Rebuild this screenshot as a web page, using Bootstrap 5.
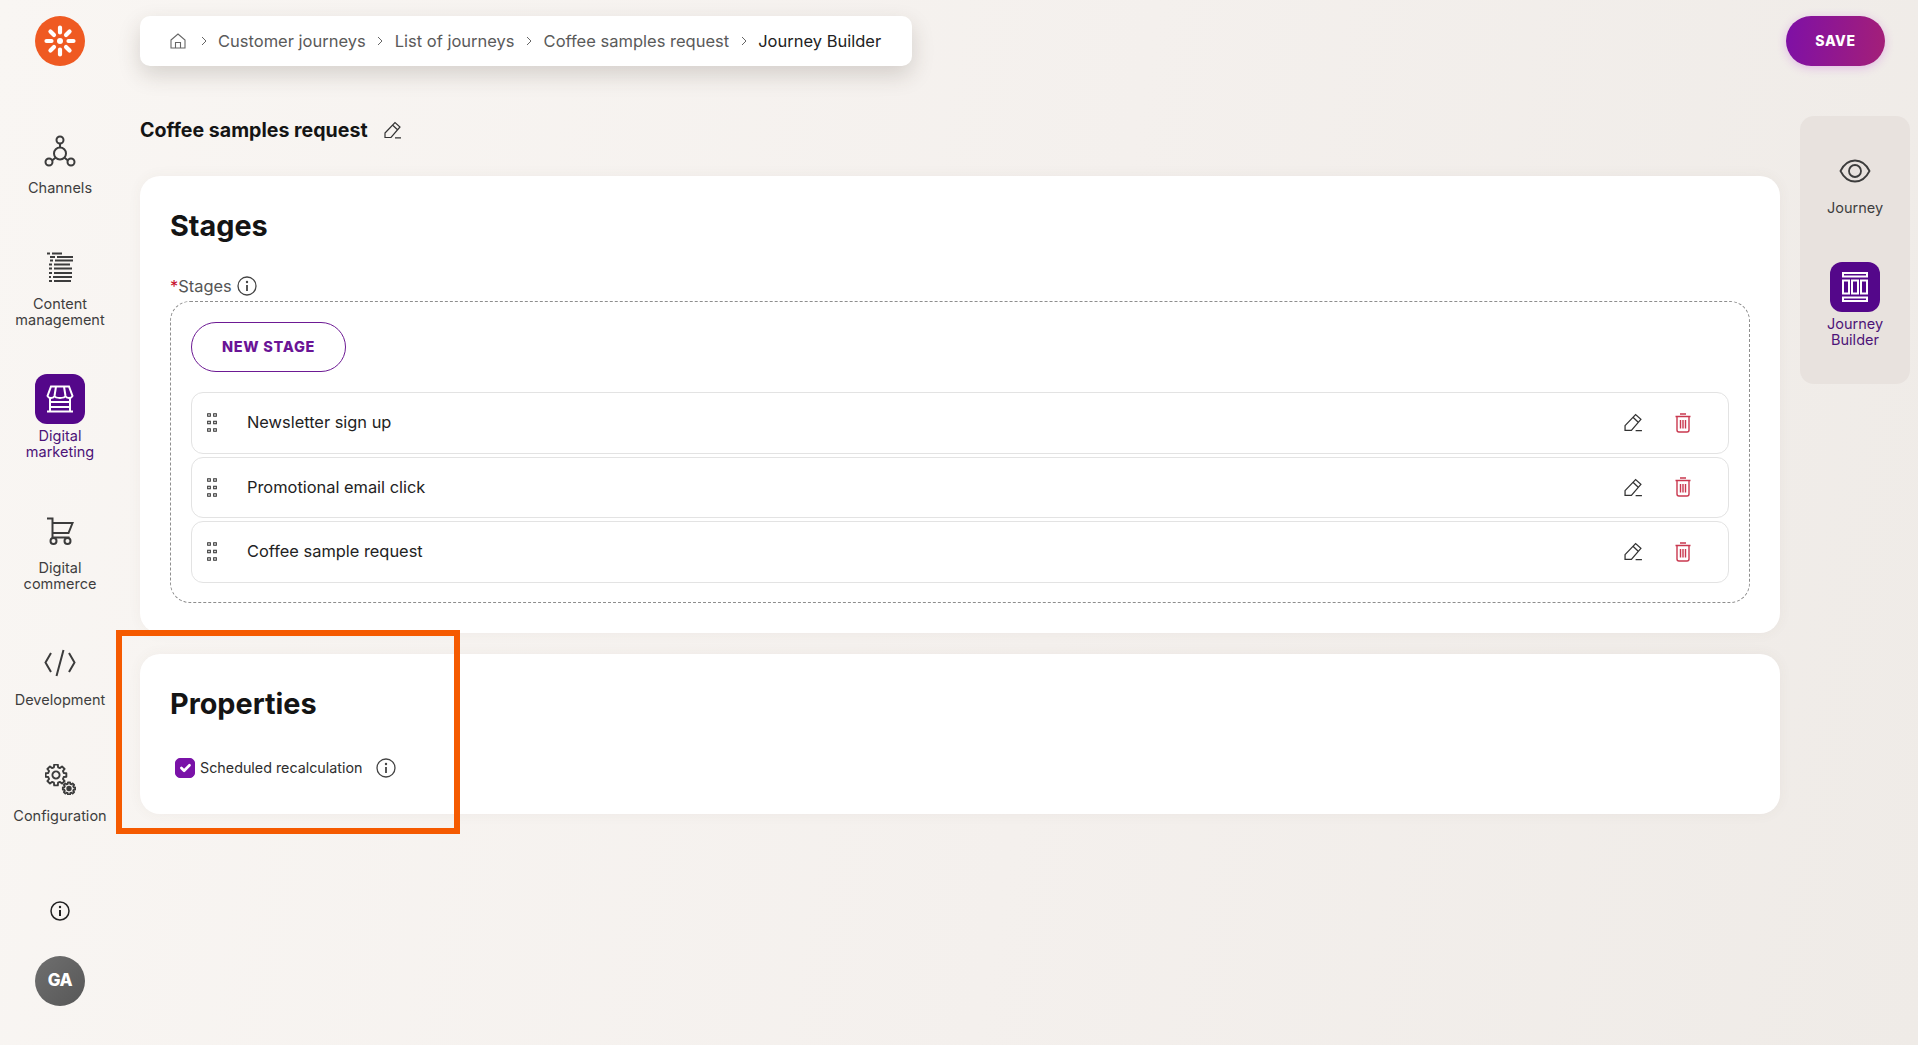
<!DOCTYPE html>
<html lang="en">
<head>
<meta charset="utf-8">
<title>Journey Builder</title>
<link href="https://cdn.jsdelivr.net/npm/bootstrap@5.3.0/dist/css/bootstrap.min.css" rel="stylesheet">
<style>
html,body{height:100%}
body{font-family:Inter,"Noto Sans",sans-serif;background:linear-gradient(100deg,#f9f6f3 0%,#f4f0ed 55%,#efebe7 100%);color:#3c3c3c;overflow:hidden;position:relative}
.app-shell{height:1045px}
.side-rail{width:120px;flex:0 0 120px;padding:16px 0 39px}
.logo-disc{width:50px;height:50px;border-radius:50%;background:#ef5a22}
.rail-list{margin-top:60px;gap:46px}
.rail-item{font-size:14.5px;line-height:16px;color:#3e3e3e;text-align:center;text-decoration:none;width:110px}
.rail-icon{width:50px;height:50px;margin-bottom:4px;color:#3c3c3c}
.rail-item.is-active{color:#4d1478}
.is-active .rail-icon{background:#54078a;border-radius:12px;color:#fff}
.info-rail{color:#222;margin-bottom:35px}
.avatar-disc{width:50px;height:50px;border-radius:50%;background:linear-gradient(135deg,#6f6f6f,#575757);color:#fff;font-weight:800;font-size:17px;letter-spacing:-.5px}
.top-strip{padding:16px 33px 0 0;height:66px}
.crumb-card{height:50px;width:772px;background:#fff;border-radius:10px;box-shadow:0 9px 22px rgba(60,50,40,.18);padding:0 0 0 30px;font-size:16.5px;color:#5a5a5a}
.crumb-card .breadcrumb-item+.breadcrumb-item{padding-left:0}
.crumb-card .breadcrumb-item+.breadcrumb-item::before{display:none}
.crumb-sep{width:29px;flex:0 0 29px;color:#666}
.crumb-home{color:#666;margin-right:3px}
.crumb-card .crumb-now{color:#222}
.save-pill{width:99px;height:50px;border:0;border-radius:25px;background:linear-gradient(95deg,#7e10a6,#a41f78);color:#fff;font-weight:800;font-size:14px;letter-spacing:.6px;box-shadow:0 2px 10px rgba(190,70,220,.3);padding:0 0 2px}
.work-row{margin-top:50px;gap:20px;padding-right:8px}
.work-col{width:1640px;flex:0 0 1640px}
.page-title{font-size:19.6px;line-height:28px;font-weight:700;color:#141414;margin:0 0 32px;gap:16px}
.panel-card{background:#fff;border:0;border-radius:20px;padding:30px;box-shadow:0 0 14px rgba(90,70,50,.05)}
.stages-panel{height:457px;margin-bottom:21px}
.props-panel{height:160px}
.panel-heading{font-size:28.8px;line-height:40px;font-weight:700;color:#141414;margin:0}
.field-label{font-size:16.4px;line-height:24px;color:#555;margin-top:28px;margin-bottom:3px;gap:5px}
.req-star{color:#c8102e}
.dash-box{border:1px dashed #8e8e8e;border-radius:20px;padding:20px;height:302px}
.ghost-pill{width:155px;height:50px;border:1px solid #6d1a94;border-radius:25px;background:#fff;color:#6a1496;font-weight:800;font-size:14.5px;letter-spacing:.7px;padding:0}
.stage-list{margin-top:20px;gap:3px}
.stage-row{height:61.5px;border:1px solid #e3e3e3;border-radius:12px;padding:0 37px 0 15px;font-size:16.4px;color:#222;background:#fff}
.stage-row .stage-name{margin-left:30px}
.row-tools{gap:32px}
.trash-tool{color:#c9384f}
.pen-tool{color:#333}
.check-line{margin-top:34px;padding-left:5px;font-size:14.3px;color:#2e2e2e;gap:5px;height:20px}
.check-line .form-check-input{width:20px;height:20px;margin:0;border-radius:5px;background-color:#7a12a8;border-color:#7a12a8;flex:none}
.check-line svg{margin-left:9px}
.view-rail{width:110px;height:268px;background:#e8e2de;border-radius:14px;padding-top:30px;gap:46px}
.view-rail .rail-item{width:100%}
.annot-frame{position:absolute;left:116px;top:630px;width:344px;height:204px;border:6px solid #f55a00;pointer-events:none}
</style>
</head>
<body>
<div class="app-shell d-flex">
  <aside class="side-rail d-flex flex-column align-items-center">
    <div class="logo-disc d-flex align-items-center justify-content-center">
      <svg width="34" height="34" viewBox="0 0 34 34" fill="none" stroke="#fff" stroke-width="4.200" stroke-linecap="round">
        <path d="M17 3.500v5M17 25.500v5M3.500 17h5M25.500 17h5M7.450 7.450 11 11M23 23l3.550 3.550M26.550 7.450 23 11M11 23l-3.550 3.550"/>
        <circle cx="17" cy="17" r="3" fill="#fff" stroke="none"/>
      </svg>
    </div>
    <nav class="rail-list d-flex flex-column align-items-center">
      <a class="rail-item d-flex flex-column align-items-center" href="#">
        <span class="rail-icon d-flex align-items-center justify-content-center">
          <svg width="32" height="32" viewBox="0 0 32 32" fill="none" stroke="currentColor" stroke-width="2"><circle cx="16" cy="18.500" r="6"/><circle cx="16" cy="5" r="3.500"/><circle cx="5" cy="27" r="3.500"/><circle cx="27" cy="27" r="3.500"/><path d="M16 8.500v4M8 25.500l3.500-2.800M24 25.500l-3.500-2.800"/></svg>
        </span>
        Channels
      </a>
      <a class="rail-item d-flex flex-column align-items-center" href="#">
        <span class="rail-icon d-flex align-items-center justify-content-center">
          <svg width="28" height="30" viewBox="0 0 28 30" fill="none" stroke="currentColor" stroke-width="1.800"><path d="M1 1.500h3M6 1.500h10M4 5h5M11 5h16M4 8.500h3M9 8.500h18M3 12.500h3M8 12.500h16M3 16.500h3M8 16.500h18M3 21h3M8 21h18M3 25h2M7 25h19M3 29h3M8 29h17"/></svg>
        </span>
        Content<br>management
      </a>
      <a class="rail-item is-active d-flex flex-column align-items-center" href="#">
        <span class="rail-icon d-flex align-items-center justify-content-center">
          <svg width="28" height="28" viewBox="0 0 28 28" fill="none" stroke="currentColor" stroke-width="2"><path d="M5 1.500h18l3.500 9.500c-1 2.500-6 2.500-7 0-1 2.500-10 2.500-11 0-1 2.500-6 2.500-7 0zM10 1.500 8.500 11M18 1.500 19.500 11M4 13v13M24 13v13M1 26.500h26M4 17h20M4 22h20"/></svg>
        </span>
        Digital<br>marketing
      </a>
      <a class="rail-item d-flex flex-column align-items-center" href="#">
        <span class="rail-icon d-flex align-items-center justify-content-center">
          <svg width="28" height="28" viewBox="0 0 28 28" fill="none" stroke="currentColor" stroke-width="2"><path d="M1 1.500h5.500v19h17M6.500 6h20L22.500 16H6.500"/><circle cx="7.500" cy="24" r="3"/><circle cx="21.500" cy="24" r="3"/></svg>
        </span>
        Digital<br>commerce
      </a>
      <a class="rail-item d-flex flex-column align-items-center" href="#">
        <span class="rail-icon d-flex align-items-center justify-content-center">
          <svg width="32" height="28" viewBox="0 0 32 28" fill="none" stroke="currentColor" stroke-width="2"><path d="M7 4 1.500 13.500 7 23M25 4l5.500 9.500L25 23M19.500 1l-7 26"/></svg>
        </span>
        Development
      </a>
      <a class="rail-item d-flex flex-column align-items-center" href="#">
        <span class="rail-icon d-flex align-items-center justify-content-center">
          <svg width="31" height="31" viewBox="0 0 31 31" fill="none" stroke="currentColor" stroke-linejoin="round">
            <g transform="translate(11 11)" stroke-width="1.900"><path d="M-2.070-7.730-1.820-10.340 1.820-10.340 2.070-7.730 4-6.930 6.020-8.600 8.600-6.020 6.930-4 7.730-2.070 10.340-1.820 10.340 1.820 7.730 2.070 6.930 4 8.600 6.020 6.020 8.600 4 6.930 2.070 7.730 1.820 10.340-1.820 10.340-2.070 7.730-4 6.930-6.020 8.600-8.600 6.020-6.930 4-7.730 2.070-10.340 1.820-10.340-1.820-7.730-2.070-6.930-4-8.600-6.020-6.020-8.600-4-6.930z"/><circle r="3.600"/></g>
            <g transform="translate(24 24.500) scale(.6)" stroke-width="3"><path d="M-2.070-7.730-1.820-10.340 1.820-10.340 2.070-7.730 4-6.930 6.020-8.600 8.600-6.020 6.930-4 7.730-2.070 10.340-1.820 10.340 1.820 7.730 2.070 6.930 4 8.600 6.020 6.020 8.600 4 6.930 2.070 7.730 1.820 10.340-1.820 10.340-2.070 7.730-4 6.930-6.020 8.600-8.600 6.020-6.930 4-7.730 2.070-10.340 1.820-10.340-1.820-7.730-2.070-6.930-4-8.600-6.020-6.020-8.600-4-6.930z"/><circle r="3" fill="currentColor"/></g>
          </svg>
        </span>
        Configuration
      </a>
    </nav>
    <div class="info-rail mt-auto d-flex">
      <svg width="20" height="20" viewBox="0 0 20 20" fill="none"><circle cx="10" cy="10" r="9" stroke="currentColor" stroke-width="1.500"/><circle cx="10" cy="6" r="1.200" fill="currentColor"/><path d="M10 9v6" stroke="currentColor" stroke-width="2"/></svg>
    </div>
    <div class="avatar-disc d-flex align-items-center justify-content-center">GA</div>
  </aside>

  <main class="flex-grow-1 ps-3 ms-1">
    <header class="top-strip d-flex justify-content-between">
      <ol class="crumb-card breadcrumb d-flex align-items-center mb-0 flex-nowrap">
        <li class="breadcrumb-item crumb-home d-flex">
          <svg width="16" height="16" viewBox="0 0 16 16" fill="none" stroke="currentColor" stroke-width="1.100"><path d="M1 7 8 1l7 6v8H1zM5.500 15V9.500h5V15"/></svg>
        </li>
        <li class="crumb-sep d-flex justify-content-center"><svg width="6" height="10" viewBox="0 0 6 10" fill="none" stroke="currentColor"><path d="m1 1 4 4-4 4"/></svg></li>
        <li class="breadcrumb-item">Customer journeys</li>
        <li class="crumb-sep d-flex justify-content-center"><svg width="6" height="10" viewBox="0 0 6 10" fill="none" stroke="currentColor"><path d="m1 1 4 4-4 4"/></svg></li>
        <li class="breadcrumb-item">List of journeys</li>
        <li class="crumb-sep d-flex justify-content-center"><svg width="6" height="10" viewBox="0 0 6 10" fill="none" stroke="currentColor"><path d="m1 1 4 4-4 4"/></svg></li>
        <li class="breadcrumb-item">Coffee samples request</li>
        <li class="crumb-sep d-flex justify-content-center"><svg width="6" height="10" viewBox="0 0 6 10" fill="none" stroke="currentColor"><path d="m1 1 4 4-4 4"/></svg></li>
        <li class="breadcrumb-item active crumb-now">Journey Builder</li>
      </ol>
      <button class="btn save-pill" type="button">SAVE</button>
    </header>

    <div class="work-row d-flex align-items-start">
      <div class="work-col">
        <h1 class="page-title d-flex align-items-center">Coffee samples request
          <svg width="18" height="18" viewBox="0 0 18 18" fill="none" stroke="#333" stroke-width="1.200"><path d="M1 12 11 1.500l5 4.500L7 16.500H1zM8.500 4l5 4.800M11 16.800h6"/></svg>
        </h1>

        <section class="panel-card card stages-panel">
          <h2 class="panel-heading">Stages</h2>
          <div class="field-label d-flex align-items-center"><span><span class="req-star">*</span>Stages</span>
            <svg width="20" height="20" viewBox="0 0 20 20" fill="none" color="#444"><circle cx="10" cy="10" r="9" stroke="currentColor" stroke-width="1.300"/><circle cx="10" cy="6" r="1.200" fill="currentColor"/><path d="M10 9v6" stroke="currentColor" stroke-width="1.800"/></svg>
          </div>
          <div class="dash-box">
            <button class="btn ghost-pill" type="button">NEW STAGE</button>
            <div class="stage-list d-flex flex-column">
              <div class="stage-row d-flex align-items-center">
                <svg width="10" height="19" viewBox="0 0 10 19" fill="none" stroke="#333" stroke-width="1.100"><path d="M.7.700h2.600v2.600H.7zM6.700.700h2.600v2.600H6.700zM.7 8.200h2.600v2.600H.7zM6.700 8.200h2.600v2.600H6.700zM.7 15.700h2.600v2.600H.7zM6.700 15.700h2.600v2.600H6.700z"/></svg>
                <span class="stage-name flex-grow-1">Newsletter sign up</span>
                <span class="row-tools d-flex align-items-center">
                  <svg class="pen-tool" width="19" height="19" viewBox="0 0 18 18" fill="none" stroke="currentColor" stroke-width="1.200"><path d="M1 12 11 1.500l5 4.500L7 16.500H1zM8.500 4l5 4.800M11 16.800h6"/></svg>
                  <svg class="trash-tool" width="16" height="20" viewBox="0 0 16 20" fill="none" stroke="currentColor" stroke-width="1.400"><path d="M5 1h6M.5 3.500h15M2 3.500V17a2 2 0 0 0 2 2h8a2 2 0 0 0 2-2V3.500M5.500 7v8.500M8 7v8.500M10.500 7v8.500"/></svg>
                </span>
              </div>
              <div class="stage-row d-flex align-items-center">
                <svg width="10" height="19" viewBox="0 0 10 19" fill="none" stroke="#333" stroke-width="1.100"><path d="M.7.700h2.600v2.600H.7zM6.700.700h2.600v2.600H6.700zM.7 8.200h2.600v2.600H.7zM6.700 8.200h2.600v2.600H6.700zM.7 15.700h2.600v2.600H.7zM6.700 15.700h2.600v2.600H6.700z"/></svg>
                <span class="stage-name flex-grow-1">Promotional email click</span>
                <span class="row-tools d-flex align-items-center">
                  <svg class="pen-tool" width="19" height="19" viewBox="0 0 18 18" fill="none" stroke="currentColor" stroke-width="1.200"><path d="M1 12 11 1.500l5 4.500L7 16.500H1zM8.500 4l5 4.800M11 16.800h6"/></svg>
                  <svg class="trash-tool" width="16" height="20" viewBox="0 0 16 20" fill="none" stroke="currentColor" stroke-width="1.400"><path d="M5 1h6M.5 3.500h15M2 3.500V17a2 2 0 0 0 2 2h8a2 2 0 0 0 2-2V3.500M5.500 7v8.500M8 7v8.500M10.500 7v8.500"/></svg>
                </span>
              </div>
              <div class="stage-row d-flex align-items-center">
                <svg width="10" height="19" viewBox="0 0 10 19" fill="none" stroke="#333" stroke-width="1.100"><path d="M.7.700h2.600v2.600H.7zM6.700.700h2.600v2.600H6.700zM.7 8.200h2.600v2.600H.7zM6.700 8.200h2.600v2.600H6.700zM.7 15.700h2.600v2.600H.7zM6.700 15.700h2.600v2.600H6.700z"/></svg>
                <span class="stage-name flex-grow-1">Coffee sample request</span>
                <span class="row-tools d-flex align-items-center">
                  <svg class="pen-tool" width="19" height="19" viewBox="0 0 18 18" fill="none" stroke="currentColor" stroke-width="1.200"><path d="M1 12 11 1.500l5 4.500L7 16.500H1zM8.500 4l5 4.800M11 16.800h6"/></svg>
                  <svg class="trash-tool" width="16" height="20" viewBox="0 0 16 20" fill="none" stroke="currentColor" stroke-width="1.400"><path d="M5 1h6M.5 3.500h15M2 3.500V17a2 2 0 0 0 2 2h8a2 2 0 0 0 2-2V3.500M5.500 7v8.500M8 7v8.500M10.500 7v8.500"/></svg>
                </span>
              </div>
            </div>
          </div>
        </section>

        <section class="panel-card card props-panel">
          <h2 class="panel-heading">Properties</h2>
          <label class="check-line d-flex align-items-center">
            <input class="form-check-input" type="checkbox" checked>
            Scheduled recalculation
            <svg width="20" height="20" viewBox="0 0 20 20" fill="none" color="#444"><circle cx="10" cy="10" r="9" stroke="currentColor" stroke-width="1.300"/><circle cx="10" cy="6" r="1.200" fill="currentColor"/><path d="M10 9v6" stroke="currentColor" stroke-width="1.800"/></svg>
          </label>
        </section>
      </div>

      <aside class="view-rail d-flex flex-column align-items-center">
        <a class="rail-item d-flex flex-column align-items-center" href="#">
          <span class="rail-icon d-flex align-items-center justify-content-center">
            <svg width="32" height="24" viewBox="0 0 32 24" fill="none" stroke="currentColor" stroke-width="1.800"><path d="M1.500 12C5 5 10 1.500 16 1.500S27 5 30.500 12C27 19 22 22.500 16 22.500S5 19 1.500 12z"/><circle cx="16" cy="12" r="6"/></svg>
          </span>
          Journey
        </a>
        <a class="rail-item is-active d-flex flex-column align-items-center" href="#">
          <span class="rail-icon d-flex align-items-center justify-content-center">
            <svg width="28" height="32" viewBox="0 0 28 32" fill="none" stroke="currentColor" stroke-width="2"><path d="M2 2h24v3.500H2zM2 26.500h24V30H2zM2 9.500h6v13H2zM11 9.500h6v13h-6zM20 9.500h6v13h-6z"/></svg>
          </span>
          Journey<br>Builder
        </a>
      </aside>
    </div>
  </main>
</div>
<div class="annot-frame"></div>
</body>
</html>
